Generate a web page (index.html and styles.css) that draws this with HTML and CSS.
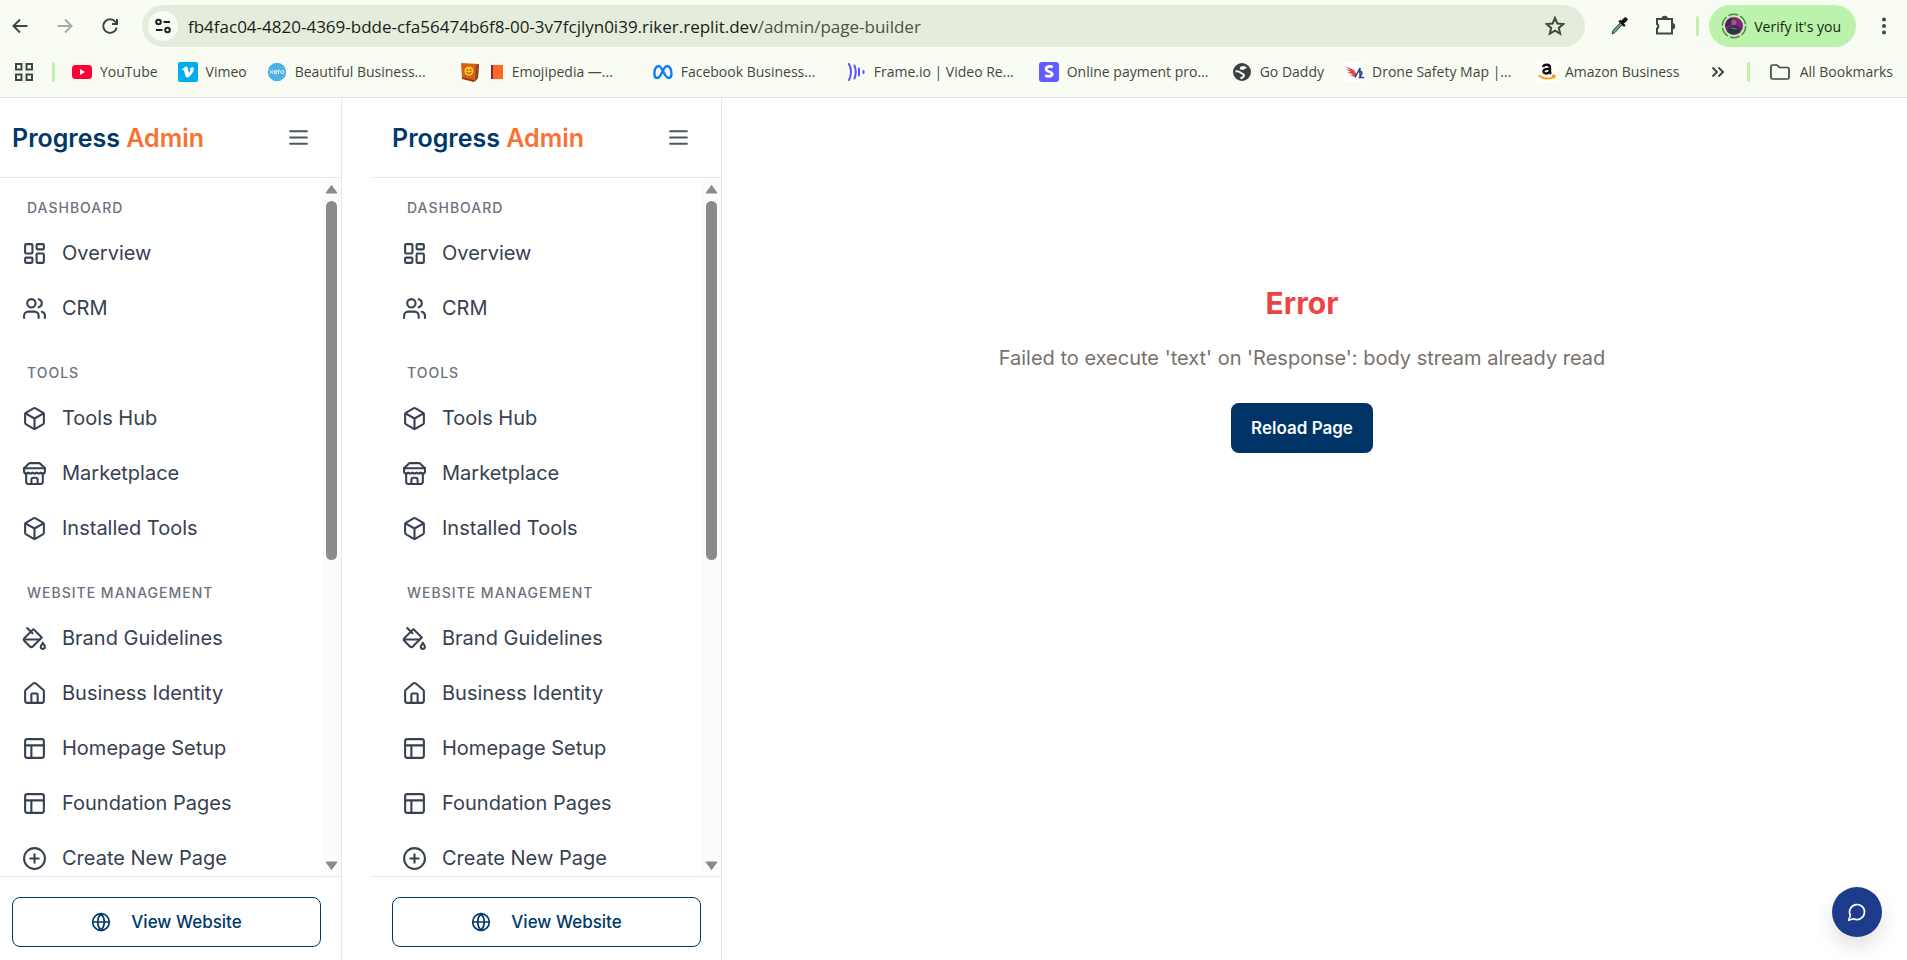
FILE: index.html
```html
<!DOCTYPE html>
<html lang="en">
<head>
<meta charset="utf-8">
<title>Page Builder - Progress Admin</title>
<link rel="stylesheet" href="styles.css">
</head>
<body>
<svg class="sprite" aria-hidden="true">
  <symbol id="i-dashboard" viewBox="0 0 24 24"><rect width="7" height="9" x="3" y="3" rx="1"/><rect width="7" height="5" x="14" y="3" rx="1"/><rect width="7" height="9" x="14" y="12" rx="1"/><rect width="7" height="5" x="3" y="16" rx="1"/></symbol>
  <symbol id="i-users" viewBox="0 0 24 24"><path d="M16 21v-2a4 4 0 0 0-4-4H6a4 4 0 0 0-4 4v2"/><circle cx="9" cy="7" r="4"/><path d="M22 21v-2a4 4 0 0 0-3-3.87M16 3.13a4 4 0 0 1 0 7.75"/></symbol>
  <symbol id="i-box" viewBox="0 0 24 24"><path d="M21 8a2 2 0 0 0-1-1.73l-7-4a2 2 0 0 0-2 0l-7 4A2 2 0 0 0 3 8v8a2 2 0 0 0 1 1.73l7 4a2 2 0 0 0 2 0l7-4A2 2 0 0 0 21 16Z"/><path d="m3.3 7 8.7 5 8.7-5M12 22V12"/></symbol>
  <symbol id="i-store" viewBox="0 0 24 24"><path d="m2 7 4.41-4.41A2 2 0 0 1 7.83 2h8.34a2 2 0 0 1 1.42.59L22 7"/><path d="M4 12v8a2 2 0 0 0 2 2h12a2 2 0 0 0 2-2v-8"/><path d="M15 22v-4a2 2 0 0 0-2-2h-2a2 2 0 0 0-2 2v4M2 7h20"/><path d="M22 7v3a2 2 0 0 1-2 2a2.7 2.7 0 0 1-1.59-.63.7.7 0 0 0-.82 0A2.7 2.7 0 0 1 16 12a2.7 2.7 0 0 1-1.59-.63.7.7 0 0 0-.82 0A2.7 2.7 0 0 1 12 12a2.7 2.7 0 0 1-1.59-.63.7.7 0 0 0-.82 0A2.7 2.7 0 0 1 8 12a2.7 2.7 0 0 1-1.59-.63.7.7 0 0 0-.82 0A2.7 2.7 0 0 1 4 12a2 2 0 0 1-2-2V7"/></symbol>
  <symbol id="i-bucket" viewBox="0 0 24 24"><path d="m19 11-8-8-8.6 8.6a2 2 0 0 0 0 2.8l5.2 5.2c.8.8 2 .8 2.8 0L19 11Z"/><path d="m5 2 5 5M2 13h15"/><path d="M22 20a2 2 0 1 1-4 0c0-1.6 1.7-2.4 2-4 .3 1.6 2 2.4 2 4Z"/></symbol>
  <symbol id="i-house" viewBox="0 0 24 24"><path d="M15 21v-8a1 1 0 0 0-1-1h-4a1 1 0 0 0-1 1v8"/><path d="M3 10a2 2 0 0 1 .709-1.528l7-5.999a2 2 0 0 1 2.582 0l7 5.999A2 2 0 0 1 21 10v9a2 2 0 0 1-2 2H5a2 2 0 0 1-2-2z"/></symbol>
  <symbol id="i-layout" viewBox="0 0 24 24"><rect width="18" height="18" x="3" y="3" rx="2"/><path d="M3 9h18M9 21V9"/></symbol>
  <symbol id="i-plus" viewBox="0 0 24 24"><circle cx="12" cy="12" r="10"/><path d="M8 12h8M12 8v8"/></symbol>
  <symbol id="i-globe" viewBox="0 0 24 24"><circle cx="12" cy="12" r="10"/><path d="M12 2a14.5 14.5 0 0 0 0 20 14.5 14.5 0 0 0 0-20M2 12h20"/></symbol>
  <symbol id="i-menu" viewBox="0 0 24 24"><path d="M4 6h16M4 12h16M4 18h16"/></symbol>
</svg>

<header class="browser">
  <div class="toolbar">
    <div class="history">
      <button class="tool" aria-label="Back"><svg viewBox="0 0 20 20" width="20" height="20"><path d="M17.500 10H3.500M10 3.500 3.500 10l6.500 6.500"/></svg></button>
      <button class="tool tool--off" aria-label="Forward" disabled><svg viewBox="0 0 20 20" width="20" height="20"><path d="M2.500 10h14M10 3.500l6.500 6.500-6.500 6.500"/></svg></button>
      <button class="tool" aria-label="Reload"><svg viewBox="0 0 20 20" width="20" height="20"><path d="M16.700 11.500A6.800 6.800 0 1 1 15.500 6L17 7.800M17 3v5h-5"/></svg></button>
    </div>
    <div class="omnibox">
      <button class="site-info" aria-label="View site information"><svg viewBox="0 0 18 18" width="18" height="18"><circle cx="4.500" cy="5" r="2.300"/><path d="M9.500 5H16M2 13h6.500"/><circle cx="13.500" cy="13" r="2.300"/></svg></button>
      <div class="url" role="textbox" aria-label="Address and search bar">fb4fac04-4820-4369-bdde-cfa56474b6f8-00-3v7fcjlyn0i39.riker.replit.dev<span class="url__path">/admin/page-builder</span></div>
      <button class="tool" aria-label="Bookmark this page"><svg viewBox="0 0 20 20" width="20" height="20"><path d="m10 2 2.400 5.500 6 .5-4.600 3.900 1.400 5.900L10 14.700l-5.200 3.100 1.400-5.900L1.600 8l6-.5z"/></svg></button>
    </div>
    <div class="extensions">
      <button class="tool" aria-label="Color picker"><svg viewBox="0 0 20 20" width="20" height="20"><path d="M11 7 4 14.500 3 18l3-1.500L13 9" fill="#5fa870" stroke-width="1"/><path d="m10 5.500 5 5 1-1-1.500-2L18 4.500C19 3 17 1 15.500 2L12.500 5l-1.500-.8z" fill="#111" stroke="#111" stroke-width="1"/></svg></button>
      <button class="tool" aria-label="Extensions"><svg viewBox="0 0 22 22" width="22" height="22"><path d="M3 4h15v14.500H3v-5a2.500 2.500 0 0 0 0-4.500z"/><path d="M8.500 4a2.200 2.200 0 0 1 4.400 0zM18 9a2.200 2.200 0 0 1 0 4.400z" fill="#3b4a3a"/></svg></button>
    </div>
    <span class="divider"></span>
    <button class="profile">
      <svg viewBox="0 0 26 26" width="26" height="26"><circle cx="13" cy="13" r="11.700" fill="none" stroke="#4e8a4c" stroke-width="1.500" stroke-dasharray="10 2.250"/><circle cx="13" cy="13" r="9" fill="#8d1d80"/><path d="M5 9a9 9 0 0 1 6-4.700L9 12l-5 2z" fill="#3b2468"/><path d="M6 18.500c1-5 4-6 7-6s6 1 6.500 5.500A9 9 0 0 1 6 18.500z" fill="#2b3444"/><circle cx="13" cy="9.500" r="2.500" fill="#8d6a64"/><path d="M10 15l6 1" stroke="#777b88"/></svg>
      Verify it's you
    </button>
    <button class="tool" aria-label="Menu"><svg viewBox="0 0 20 20" width="20" height="20"><g fill="#3b4a3a" stroke="none"><circle cx="10" cy="3.500" r="2"/><circle cx="10" cy="10" r="2"/><circle cx="10" cy="16.500" r="2"/></g></svg></button>
  </div>

  <nav class="bookmarks" aria-label="Bookmarks">
    <button class="tool tool--apps" aria-label="Apps"><svg viewBox="0 0 18 18" width="18" height="18"><path d="M1 1h5.500v5.500H1zM11.500 1H17v5.500h-5.500zM1 11.500h5.500V17H1zM11.500 11.500H17V17h-5.500z"/></svg></button>
    <span class="divider"></span>
    <div class="bookmarks__list">
      <a class="bookmark" href="#"><svg viewBox="0 0 20 20" width="20" height="20"><rect y="3" width="20" height="14" rx="3.500" fill="#f03"/><path d="M8 7l5 3-5 3z" fill="#fff"/></svg><span>YouTube</span></a>
      <a class="bookmark" href="#"><svg viewBox="0 0 20 20" width="20" height="20"><rect width="20" height="20" rx="2" fill="#00adef"/><path d="M4 7.500 7.300 4.700C9.500 3.500 9.800 6 10.200 8c.4 2 .8 3.200 1.500 2.100.8-1.100 1.300-2.100.8-2.600-.3-.3-.8-.2-1.200 0 .8-2.300 5.200-3.800 4.500 0-.8 3.500-4 7.300-5.800 8-2.100.5-2.700-2-3.200-4-.5-2-.6-3.500-1.100-3.500L4.700 8.600z" fill="#fff"/></svg><span>Vimeo</span></a>
      <a class="bookmark bookmark--full" href="#"><svg viewBox="0 0 20 20" width="20" height="20"><circle cx="10" cy="10" r="9.200" fill="#4bb0e6"/><g fill="none" stroke="#e8f6fd"><path d="m3 8.200 3 3.600M6 8.200l-3 3.600M7 10h3.200c0-2.300-3.200-2.300-3.200 0 0 2 2 2.300 3 1.300M11.500 12V8.200h1.500"/><circle cx="15.300" cy="10" r="1.600"/></g></svg><span>Beautiful Business...</span></a>
      <a class="bookmark bookmark--full" href="#"><svg viewBox="0 0 20 20" width="20" height="20"><path d="M1 1 19 2l-1 14-4 4L2 16z" fill="#d95f16"/><path d="m16 3 3-1-1 14-3 4z" fill="#8a4a2a"/><path d="m2 15 12 3v2L2 17z" fill="#9a3412"/><circle cx="9" cy="9" r="4.600" fill="#ffc928"/><circle cx="7.500" cy="8" r=".8" fill="#7a3d00"/><circle cx="10.700" cy="8" r=".8" fill="#7a3d00"/><path d="M6.500 10.300q2.500 2.500 5 0" fill="none" stroke="#7a3d00"/></svg><svg class="bookmark__emoji" viewBox="0 0 14 16" width="14" height="16"><path d="M1 1h12v14H1z" fill="#ff6723"/><path d="M1 1h2v14H1z" fill="#8c1c3c"/></svg><span>Emojipedia —...</span></a>
      <a class="bookmark bookmark--full" href="#"><svg viewBox="0 0 20 20" width="20" height="20"><path d="M1.500 12.500C1 7 3.500 4 5.500 4c4 0 6 12 10 12 2 0 3-1.500 3-4C18.500 7 16.500 4 14.200 4 10 4 8.500 16 4.500 16c-2 0-3-1.500-3-3.500z" fill="none" stroke="#0a7cf5" stroke-width="2.400"/></svg><span>Facebook Business...</span></a>
      <a class="bookmark bookmark--full" href="#"><svg viewBox="0 0 20 20" width="20" height="20"><path d="M3 2q4 8 0 16M8.500 3.500q2.500 6.500 0 13M13 6.500v7M17.500 9v2" fill="none" stroke="#5b53ff" stroke-width="2" stroke-linecap="round"/></svg><span>Frame.io | Video Re...</span></a>
      <a class="bookmark bookmark--full" href="#"><svg viewBox="0 0 20 20" width="20" height="20"><rect width="20" height="20" rx="3" fill="#635bff"/><path d="M13.700 5.200C11.500 4 7.200 4 7.200 7c0 3.500 6 2 6 5 0 3-5 2.600-7 1.300" fill="none" stroke="#fff" stroke-width="2.800"/></svg><span>Online payment pro...</span></a>
      <a class="bookmark" href="#"><svg viewBox="0 0 20 20" width="20" height="20"><circle cx="10" cy="10" r="9" fill="#3d4043"/><path d="M3.500 9.500c2.500-.5 4 .2 5.500 1.500s3.500 1 3 2.800-2 1.700-3.500 2.700" fill="none" stroke="#f9fcf3" stroke-width="2"/><path d="M9 4.500c3-1.500 5.500 0 6 2-1.500-.5-2.500.5-3 1.500-1.500-.5-3-.5-4-.5C7.500 6.500 8 5 9 4.500z" fill="#f9fcf3"/></svg><span>Go Daddy</span></a>
      <a class="bookmark bookmark--full" href="#"><svg viewBox="0 0 20 20" width="20" height="20"><rect width="20" height="20" fill="#fff"/><path d="M1 4l9 4 3 5-2 2-5-2 3-.5L3 10l4 0L1 7l5 1z" fill="#dd4a4c"/><path d="M11 15.500 16 6v9M15 10.500c3-2 4 0 2 2.500l-1.500 2.500H20" fill="none" stroke="#23457c" stroke-width="1.500"/></svg><span>Drone Safety Map |...</span></a>
      <a class="bookmark" href="#"><svg viewBox="0 0 20 20" width="20" height="20"><rect width="20" height="20" rx="3" fill="#fff"/><path d="M6 5c1-3 7-3 7 .5V10q0 1 1 2M12.500 7C8 6.500 6 8 6.500 10s5 2.500 6-1" fill="none" stroke="#111" stroke-width="2.400"/><path d="M1.500 13.500q8 5.500 15.500 1.200M15 13.500q3-.5 3 0t-1 3" fill="none" stroke="#ff9900" stroke-width="1.700"/></svg><span>Amazon Business</span></a>
    </div>
    <button class="tool" aria-label="More bookmarks"><svg viewBox="0 0 14 14" width="14" height="14"><path d="m1.500 2.500 4.500 4.500-4.500 4.500M7.500 2.500 12 7l-4.500 4.500"/></svg></button>
    <span class="divider"></span>
    <a class="bookmark bookmark--all" href="#"><svg viewBox="0 0 22 20" width="22" height="20"><path d="M2 4.500q0-1.500 1.500-1.500H8l2.500 2.500h8q1.500 0 1.500 1.500v8.500q0 1.500-1.500 1.500h-15Q2 17 2 15.500z" fill="none" stroke="#3b4a3a" stroke-width="1.700"/></svg><span>All Bookmarks</span></a>
  </nav>
</header>

<div class="app">
  <aside class="sidebar sidebar--outer">
    <div class="sidebar__head">
      <a class="brand" href="#">Progress <span class="brand__accent">Admin</span></a>
      <button class="menu-button" aria-label="Toggle sidebar"><svg class="icon"><use href="#i-menu"/></svg></button>
    </div>
    <div class="sidebar__body">
      <nav class="nav">
        <section class="nav__group">
          <h2 class="nav__label">DASHBOARD</h2>
          <a class="nav__item" href="#"><svg class="icon"><use href="#i-dashboard"/></svg>Overview</a>
          <a class="nav__item" href="#"><svg class="icon"><use href="#i-users"/></svg>CRM</a>
        </section>
        <section class="nav__group">
          <h2 class="nav__label">TOOLS</h2>
          <a class="nav__item" href="#"><svg class="icon"><use href="#i-box"/></svg>Tools Hub</a>
          <a class="nav__item" href="#"><svg class="icon"><use href="#i-store"/></svg>Marketplace</a>
          <a class="nav__item" href="#"><svg class="icon"><use href="#i-box"/></svg>Installed Tools</a>
        </section>
        <section class="nav__group">
          <h2 class="nav__label">WEBSITE MANAGEMENT</h2>
          <a class="nav__item" href="#"><svg class="icon"><use href="#i-bucket"/></svg>Brand Guidelines</a>
          <a class="nav__item" href="#"><svg class="icon"><use href="#i-house"/></svg>Business Identity</a>
          <a class="nav__item" href="#"><svg class="icon"><use href="#i-layout"/></svg>Homepage Setup</a>
          <a class="nav__item" href="#"><svg class="icon"><use href="#i-layout"/></svg>Foundation Pages</a>
          <a class="nav__item" href="#"><svg class="icon"><use href="#i-plus"/></svg>Create New Page</a>
        </section>
      </nav>
      <div class="scrollbar" aria-hidden="true">
        <svg class="scrollbar__arrow" viewBox="0 0 13 10"><path d="M6.500 1.500 12 9H1z"/></svg>
        <div class="scrollbar__track"><div class="scrollbar__thumb"></div></div>
        <svg class="scrollbar__arrow" viewBox="0 0 13 10"><path d="M6.500 8.500 12 1H1z"/></svg>
      </div>
    </div>
    <div class="sidebar__foot">
      <a class="view-site" href="#"><svg class="icon icon--small"><use href="#i-globe"/></svg>View Website</a>
    </div>
  </aside>

  <aside class="sidebar">
    <div class="sidebar__head">
      <a class="brand" href="#">Progress <span class="brand__accent">Admin</span></a>
      <button class="menu-button" aria-label="Toggle sidebar"><svg class="icon"><use href="#i-menu"/></svg></button>
    </div>
    <div class="sidebar__body">
      <nav class="nav">
        <section class="nav__group">
          <h2 class="nav__label">DASHBOARD</h2>
          <a class="nav__item" href="#"><svg class="icon"><use href="#i-dashboard"/></svg>Overview</a>
          <a class="nav__item" href="#"><svg class="icon"><use href="#i-users"/></svg>CRM</a>
        </section>
        <section class="nav__group">
          <h2 class="nav__label">TOOLS</h2>
          <a class="nav__item" href="#"><svg class="icon"><use href="#i-box"/></svg>Tools Hub</a>
          <a class="nav__item" href="#"><svg class="icon"><use href="#i-store"/></svg>Marketplace</a>
          <a class="nav__item" href="#"><svg class="icon"><use href="#i-box"/></svg>Installed Tools</a>
        </section>
        <section class="nav__group">
          <h2 class="nav__label">WEBSITE MANAGEMENT</h2>
          <a class="nav__item" href="#"><svg class="icon"><use href="#i-bucket"/></svg>Brand Guidelines</a>
          <a class="nav__item" href="#"><svg class="icon"><use href="#i-house"/></svg>Business Identity</a>
          <a class="nav__item" href="#"><svg class="icon"><use href="#i-layout"/></svg>Homepage Setup</a>
          <a class="nav__item" href="#"><svg class="icon"><use href="#i-layout"/></svg>Foundation Pages</a>
          <a class="nav__item" href="#"><svg class="icon"><use href="#i-plus"/></svg>Create New Page</a>
        </section>
      </nav>
      <div class="scrollbar" aria-hidden="true">
        <svg class="scrollbar__arrow" viewBox="0 0 13 10"><path d="M6.500 1.500 12 9H1z"/></svg>
        <div class="scrollbar__track"><div class="scrollbar__thumb"></div></div>
        <svg class="scrollbar__arrow" viewBox="0 0 13 10"><path d="M6.500 8.500 12 1H1z"/></svg>
      </div>
    </div>
    <div class="sidebar__foot">
      <a class="view-site" href="#"><svg class="icon icon--small"><use href="#i-globe"/></svg>View Website</a>
    </div>
  </aside>

  <main class="content">
    <h1 class="error-title">Error</h1>
    <p class="error-text">Failed to execute 'text' on 'Response': body stream already read</p>
    <button class="reload">Reload Page</button>
  </main>
</div>

<button class="chat" aria-label="Open chat"><svg viewBox="0 0 24 24" width="20" height="20"><path d="M7.900 20A9 9 0 1 0 4 16.100L2 22Z"/></svg></button>
</body>
</html>
```

FILE: styles.css
```css
*, *::before, *::after { box-sizing: border-box; }

body {
  margin: 0;
  height: 100vh;
  display: flex;
  flex-direction: column;
  overflow: hidden;
  background: #fff;
  color: #374151;
  font-family: Inter, "Liberation Sans", sans-serif;
  font-size: 20px;
}

a { color: inherit; text-decoration: none; }
button { margin: 0; padding: 0; border: 0; background: none; color: inherit; font: inherit; cursor: pointer; }
svg { display: block; flex: none; }
.sprite { position: absolute; width: 0; height: 0; }

/* Browser chrome */
.browser {
  flex: none;
  background: #f9fcf3;
  border-bottom: 1px solid #dfe4d7;
  color: #43483f;
  font-family: "Open Sans", "Noto Sans", sans-serif;
  font-size: 14px;
}

.toolbar { display: flex; align-items: center; height: 52px; padding: 0 13px 0 10px; }
.history { display: flex; gap: 25px; margin-right: 22px; }

.tool { flex: none; color: #3b4a3a; }
.tool svg { fill: none; stroke: currentColor; stroke-width: 2; }
.tool--off { color: #a6aca1; }

.omnibox {
  flex: 1;
  display: flex;
  align-items: center;
  gap: 10px;
  height: 42px;
  padding: 0 20px 0 6px;
  border-radius: 21px;
  background: #e4ecdc;
}
.site-info {
  display: grid;
  place-items: center;
  width: 30px;
  height: 30px;
  border-radius: 50%;
  background: #f9fcf3;
}
.site-info svg { fill: none; stroke: #1d241c; stroke-width: 2; }
.url { flex: 1; color: #191d17; font-size: 17px; white-space: nowrap; }
.url__path { color: #4c5148; }

.extensions { display: flex; align-items: center; gap: 25px; margin: 0 20px 0 24px; }
.divider { flex: none; width: 3px; height: 20px; border-radius: 2px; background: #bdf2ac; }

.profile {
  display: flex;
  align-items: center;
  gap: 7px;
  height: 42px;
  margin: 0 18px 0 10px;
  padding: 0 15px 0 12px;
  border-radius: 21px;
  background: #bdf2ac;
  color: #0c2a0a;
}

.bookmarks { display: flex; align-items: center; height: 45px; padding: 0 14px 6px 15px; }
.tool--apps { margin-right: 19px; }
.bookmarks__list { flex: 1; display: flex; gap: 20px; margin-left: 17px; }
.bookmark { display: flex; align-items: center; gap: 8px; white-space: nowrap; }
.bookmark--full { width: 173px; }
.bookmark__emoji { margin-left: 2px; }
.bookmarks > .divider:nth-of-type(2) { margin: 0 19px 0 22px; }
.bookmark--all { gap: 9px; }

/* Application */
.app { flex: 1; display: flex; min-height: 0; overflow: hidden; }

.sidebar {
  flex: none;
  display: flex;
  flex-direction: column;
  width: 350px;
  border-right: 1px solid #e5e7eb;
}
.sidebar--outer { margin: 0 30px 0 -8px; }

.sidebar__head {
  display: flex;
  align-items: center;
  justify-content: space-between;
  height: 80px;
  padding: 0 20px;
  border-bottom: 1px solid #e5e7eb;
}
.brand { color: #003969; font-size: 25px; font-weight: 600; }
.brand__accent { color: #f97233; }
.menu-button { padding: 10px; color: #4b5563; }

.icon {
  width: 25px;
  height: 25px;
  fill: none;
  stroke: currentColor;
  stroke-width: 2;
  stroke-linecap: round;
  stroke-linejoin: round;
}
.icon--small { width: 20px; height: 20px; }

.sidebar__body { flex: 1; display: flex; min-height: 0; overflow: hidden; }
.nav { flex: 1; padding: 20px 0 0 15px; }
.nav__group { display: flex; flex-direction: column; gap: 5px; margin-bottom: 30px; }
.nav__label {
  margin: 0 0 5px;
  padding-left: 20px;
  color: #6b7280;
  font-size: 14px;
  font-weight: 500;
  letter-spacing: 1px;
  line-height: 20px;
}
.nav__item { display: flex; align-items: center; gap: 15px; height: 50px; padding: 0 15px; }

.scrollbar {
  display: flex;
  flex-direction: column;
  align-items: center;
  gap: 7px;
  width: 19px;
  padding: 6px 0 5px;
  background: #fcfcfc;
}
.scrollbar__arrow { width: 13px; height: 10px; fill: #8b8b8b; stroke: #8b8b8b; stroke-linejoin: round; }
.scrollbar__track { flex: 1; width: 11px; }
.scrollbar__thumb { height: 55%; border-radius: 6px; background: #8b8b8b; }

.sidebar__foot { padding: 20px 20px 13px; border-top: 1px solid #e5e7eb; }
.view-site {
  display: flex;
  align-items: center;
  justify-content: center;
  gap: 20px;
  height: 50px;
  border: 1px solid #003969;
  border-radius: 8px;
  color: #003969;
  font-size: 17px;
  font-weight: 500;
}

.content {
  flex: 1;
  display: flex;
  flex-direction: column;
  align-items: center;
  padding: 185px 25px 0 0;
}
.error-title { margin: 0 0 20px; color: #ef4444; font-size: 30px; font-weight: 700; line-height: 40px; }
.error-text { margin: 0 0 30px; color: #78716c; line-height: 30px; }
.reload {
  height: 50px;
  padding: 0 20px;
  border-radius: 8px;
  background: #003366;
  color: #f8fafc;
  font-size: 17px;
  font-weight: 600;
}

.chat {
  position: fixed;
  right: 25px;
  bottom: 23px;
  display: grid;
  place-items: center;
  width: 50px;
  height: 50px;
  border-radius: 50%;
  background: #1e3a8a;
  box-shadow: 0 10px 20px rgba(0, 0, 0, 0.12);
}
.chat svg { fill: none; stroke: #fff; stroke-width: 2; stroke-linejoin: round; }
```
